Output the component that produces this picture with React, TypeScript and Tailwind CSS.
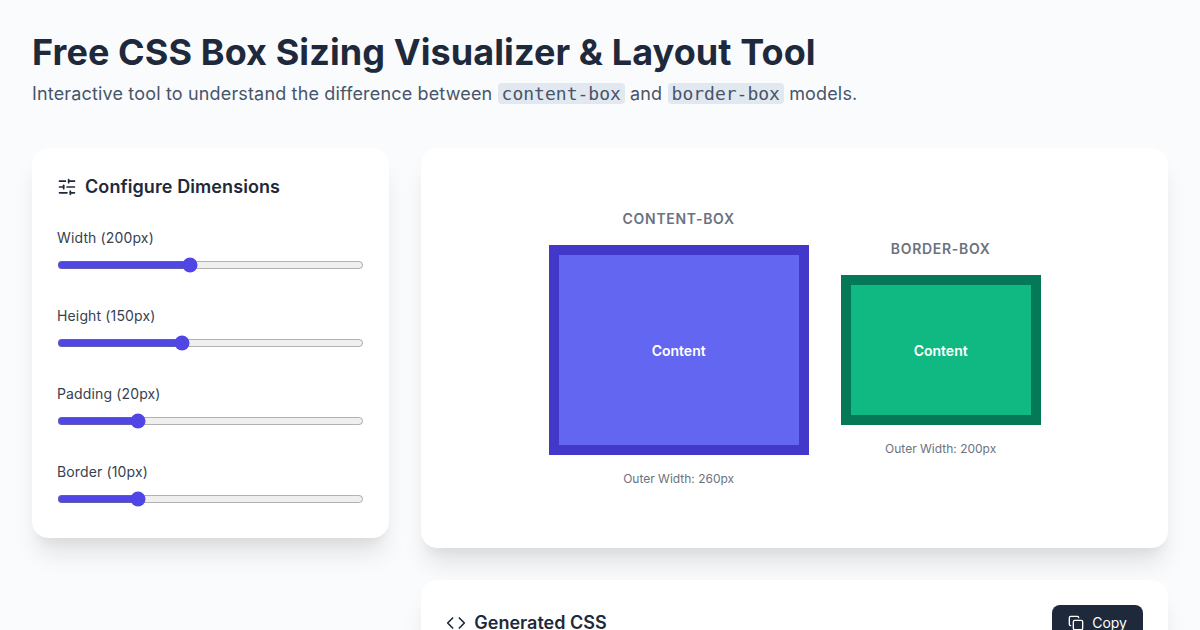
import { Code, Copy, SlidersHorizontal } from "lucide-react";

const SLIDERS = [
  { label: "Width (200px)", min: 50, max: 400, value: 200 },
  { label: "Height (150px)", min: 50, max: 300, value: 150 },
  { label: "Padding (20px)", min: 0, max: 80, value: 20 },
  { label: "Border (10px)", min: 0, max: 40, value: 10 },
];

export default function App() {
  return (
    <div className="h-[630px] overflow-hidden bg-[#fafbfd] px-8 pt-8 font-['Inter',sans-serif] text-[#1e293b]">
      <header className="mb-10">
        <h1 className="text-4xl font-bold leading-10 tracking-[0.0025em]">Free CSS Box Sizing Visualizer &amp; Layout Tool</h1>
        <p className="mt-2 text-lg leading-7 tracking-[0.009em] text-[#475569]">
          Interactive tool to understand the difference between{" "}
          <code className="rounded bg-[#e2e8f0] px-1 font-['DejaVu_Sans_Mono',monospace] text-lg tracking-normal">content-box</code> and{" "}
          <code className="rounded bg-[#e2e8f0] px-1 font-['DejaVu_Sans_Mono',monospace] text-lg tracking-normal">border-box</code> models.
        </p>
      </header>

      <div className="grid grid-cols-3 items-start gap-8">
        {/* Controls */}
        <section className="rounded-2xl border border-white bg-white px-6 pb-[29px] pt-6 shadow-[0_20px_25px_-5px_rgba(0,0,0,0.1),0_10px_10px_-5px_rgba(0,0,0,0.04)]">
          <h2 className="mb-[27px] flex items-center gap-2 text-lg font-semibold leading-7 tracking-[0.005em]">
            <SlidersHorizontal className="h-5 w-5" /> Configure Dimensions
          </h2>
          <div className="space-y-8">
            {SLIDERS.map((s) => (
              <div key={s.label}>
                <label className="mb-2 block text-sm leading-5 tracking-[0.01em] text-[#374151]">{s.label}</label>
                <input
                  type="range"
                  min={s.min}
                  max={s.max}
                  defaultValue={s.value}
                  className="block h-[18px] w-full accent-[#4f46e5]"
                />
              </div>
            ))}
          </div>
        </section>

        <div className="col-span-2 space-y-8">
          {/* Preview */}
          <section className="flex h-[400px] items-center justify-center gap-8 rounded-2xl border border-white bg-white shadow-[0_20px_25px_-5px_rgba(0,0,0,0.1),0_10px_10px_-5px_rgba(0,0,0,0.04)]">
            <div className="flex flex-col items-center">
              <h3 className="mb-[17px] text-sm font-semibold leading-[18px] tracking-wider text-[#6b7280]">CONTENT-BOX</h3>
              <div className="flex h-[210px] w-[260px] items-center justify-center border-[10px] border-[#4338ca] bg-[#6366f1] pt-0.5 text-sm font-semibold text-white">
                Content
              </div>
              <p className="mt-4 text-xs leading-4 text-[#6b7280]">Outer Width: 260px</p>
            </div>
            <div className="flex flex-col items-center">
              <h3 className="mb-[17px] text-sm font-semibold leading-[18px] tracking-wider text-[#6b7280]">BORDER-BOX</h3>
              <div className="flex h-[150px] w-[200px] items-center justify-center border-[10px] border-[#047857] bg-[#10b981] pt-0.5 text-sm font-semibold text-white">
                Content
              </div>
              <p className="mt-4 text-xs leading-4 text-[#6b7280]">Outer Width: 200px</p>
            </div>
          </section>

          {/* Output */}
          <section className="rounded-2xl border border-white bg-white p-6 shadow-[0_20px_25px_-5px_rgba(0,0,0,0.1),0_10px_10px_-5px_rgba(0,0,0,0.04)]">
            <div className="flex items-center justify-between">
              <h2 className="flex items-center gap-2 text-lg font-semibold leading-7">
                <Code className="h-5 w-5" /> Generated CSS
              </h2>
              <button className="flex items-center gap-2 rounded-lg bg-[#1e293b] px-4 py-2 text-sm leading-5 text-white">
                <Copy className="h-4 w-4" /> Copy
              </button>
            </div>
          </section>
        </div>
      </div>
    </div>
  );
}
